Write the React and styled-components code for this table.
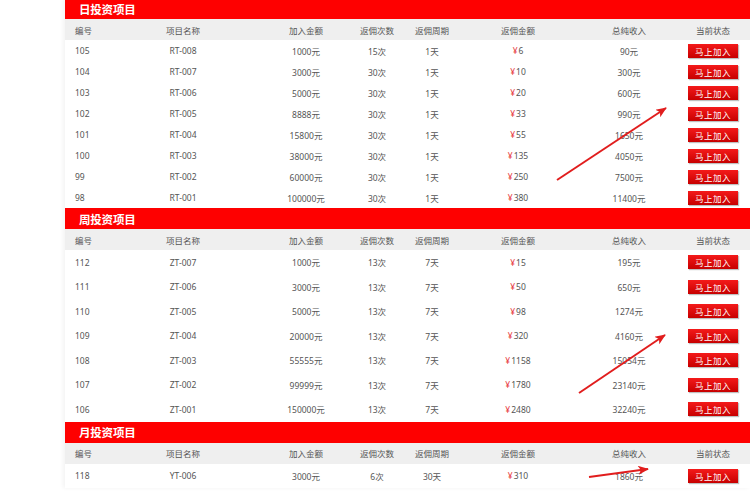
import React from 'react';
import styled, { createGlobalStyle } from 'styled-components';

const GlobalStyle = createGlobalStyle`
    body {
        margin: 0;
        background: #fff;
        font-family: "Noto Sans", "Noto Sans CJK SC", sans-serif;
    }
`;

const COLS = '35px 166px 80px 62px 48px 124px 98px 70px 1fr';
const HEADS = ['编号', '项目名称', '加入金额', '返佣次数', '返佣周期', '返佣金额', '总纯收入', '当前状态'];

const sections = [
    {
        title: '日投资项目',
        rowHeight: 21,
        rows: [
            [105, 'RT-008', '1000元', '15次', '1天', 6, '90元'],
            [104, 'RT-007', '3000元', '30次', '1天', 10, '300元'],
            [103, 'RT-006', '5000元', '30次', '1天', 20, '600元'],
            [102, 'RT-005', '8888元', '30次', '1天', 33, '990元'],
            [101, 'RT-004', '15800元', '30次', '1天', 55, '1650元'],
            [100, 'RT-003', '38000元', '30次', '1天', 135, '4050元'],
            [99, 'RT-002', '60000元', '30次', '1天', 250, '7500元'],
            [98, 'RT-001', '100000元', '30次', '1天', 380, '11400元'],
        ],
    },
    {
        title: '周投资项目',
        rowHeight: 24.5,
        rows: [
            [112, 'ZT-007', '1000元', '13次', '7天', 15, '195元'],
            [111, 'ZT-006', '3000元', '13次', '7天', 50, '650元'],
            [110, 'ZT-005', '5000元', '13次', '7天', 98, '1274元'],
            [109, 'ZT-004', '20000元', '13次', '7天', 320, '4160元'],
            [108, 'ZT-003', '55555元', '13次', '7天', 1158, '15054元'],
            [107, 'ZT-002', '99999元', '13次', '7天', 1780, '23140元'],
            [106, 'ZT-001', '150000元', '13次', '7天', 2480, '32240元'],
        ],
    },
    {
        title: '月投资项目',
        rowHeight: 24,
        rows: [
            [118, 'YT-006', '3000元', '6次', '30天', 310, '1860元'],
        ],
    },
];

export default function App() {
    return (
        <Page>
            <GlobalStyle />
            <Board>
                {sections.map(sec => (
                    <Section key={sec.title}>
                        <TitleBar>{sec.title}</TitleBar>
                        <HeadRow>
                            {HEADS.map((h, i) => <Cell key={h} $first={i === 0}>{h}</Cell>)}
                        </HeadRow>
                        {sec.rows.map(r => (
                            <Row key={r[0]} $h={sec.rowHeight}>
                                <Cell $first>{r[0]}</Cell>
                                <Cell>{r[1]}</Cell>
                                <Cell>{r[2]}</Cell>
                                <Cell>{r[3]}</Cell>
                                <Cell>{r[4]}</Cell>
                                <Cell><Yen>¥</Yen>{r[5]}</Cell>
                                <Cell>{r[6]}</Cell>
                                <Cell><JoinButton>马上加入</JoinButton></Cell>
                            </Row>
                        ))}
                    </Section>
                ))}
            </Board>
            <Arrows viewBox="0 0 750 493">
                <defs>
                    <marker id="head" viewBox="0 0 12 10" refX="11" refY="5"
                        markerWidth="12" markerHeight="9" markerUnits="userSpaceOnUse" orient="auto">
                        <path d="M0,0 L12,5 L0,10 L3,5 z" fill="#e11d1d" />
                    </marker>
                </defs>
                <line x1="557" y1="180" x2="666" y2="108" stroke="#e11d1d" strokeWidth="2" markerEnd="url(#head)" />
                <line x1="579" y1="393" x2="665" y2="335" stroke="#e11d1d" strokeWidth="2" markerEnd="url(#head)" />
                <line x1="589" y1="477" x2="648" y2="469" stroke="#e11d1d" strokeWidth="2" markerEnd="url(#head)" />
            </Arrows>
        </Page>
    );
}

const Page = styled.div`
    position: relative;
    width: 750px;
    height: 493px;
    overflow: hidden;
`;

const Board = styled.div`
    margin: -2px 0 0 65px;
    box-shadow: -2px 0 4px rgba(0, 0, 0, 0.05);
`;

const Section = styled.div`
    display: flex;
    flex-direction: column;
`;

const TitleBar = styled.div`
    height: 21px;
    display: flex;
    align-items: center;
    padding-left: 14px;
    background: #fe0000;
    color: #fff;
    font-family: "Noto Sans CJK SC", sans-serif;
    font-weight: 700;
    font-size: 11.5px;
    letter-spacing: -0.2px;
`;

const Row = styled.div`
    display: grid;
    grid-template-columns: ${COLS};
    height: ${p => p.$h}px;
    font-size: 8.5px;
    color: #555;
`;

const HeadRow = styled(Row)`
    height: 21px;
    background: #efefef;
    font-family: "Noto Sans CJK SC", sans-serif;
`;

const Cell = styled.div`
    display: flex;
    align-items: center;
    justify-content: ${p => (p.$first ? 'flex-start' : 'center')};
    padding-left: ${p => (p.$first ? '10px' : '0')};
    white-space: nowrap;
`;

const Yen = styled.span`
    color: #e8474a;
    margin-right: 1px;
`;

const JoinButton = styled.div`
    width: 50px;
    height: 14px;
    display: flex;
    align-items: center;
    justify-content: center;
    background: linear-gradient(#f41a1a, #c70000);
    color: #fff;
    font-family: "Noto Sans CJK SC", sans-serif;
    font-size: 8.5px;
    letter-spacing: 0.5px;
    box-shadow: 1px 1px 1px rgba(0, 0, 0, 0.25);
`;

const Arrows = styled.svg`
    position: absolute;
    left: 0;
    top: 0;
    width: 750px;
    height: 493px;
    pointer-events: none;
`;
